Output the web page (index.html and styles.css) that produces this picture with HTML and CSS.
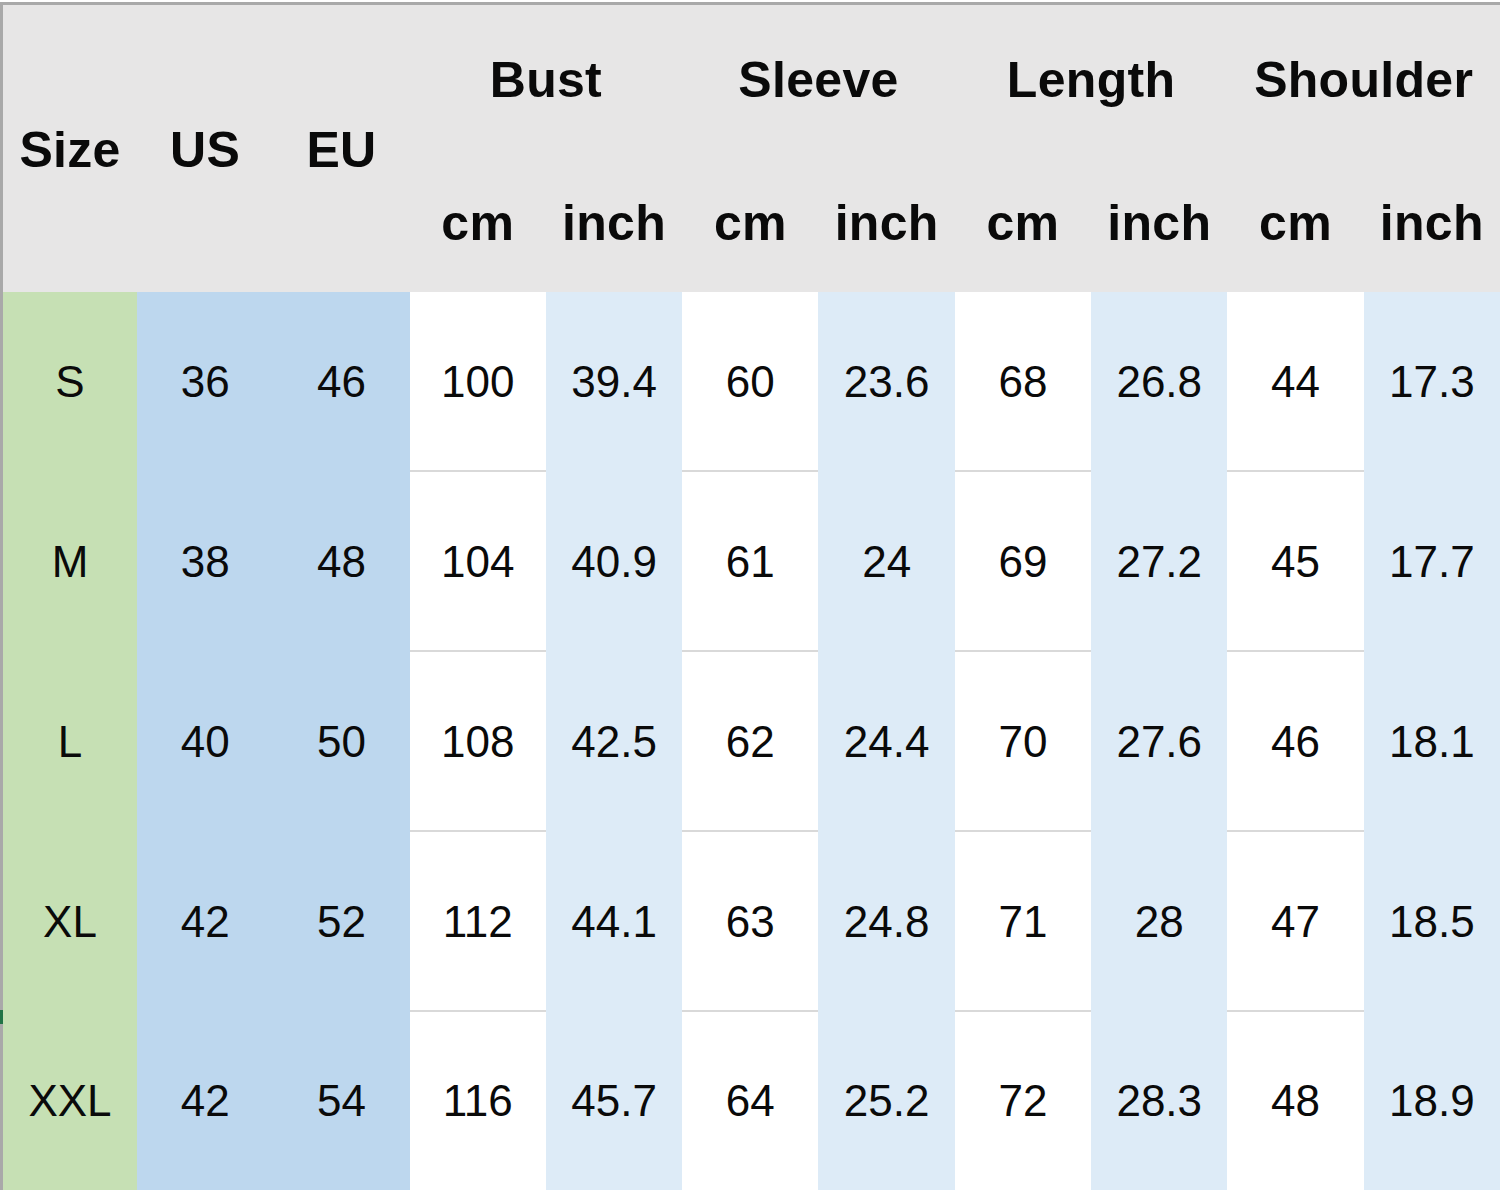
FILE: index.html
```html
<!DOCTYPE html>
<html lang="en">
<head>
<meta charset="utf-8">
<title>Size Chart</title>
<link rel="stylesheet" href="styles.css">
</head>
<body>
<div class="sheet">
  <div class="grid">
    <div class="h h-span">Size</div>
    <div class="h h-span">US</div>
    <div class="h h-span">EU</div>
    <div class="h h-group">Bust</div>
    <div class="h h-group">Sleeve</div>
    <div class="h h-group">Length</div>
    <div class="h h-group">Shoulder</div>
    <div class="h h-unit">cm</div><div class="h h-unit">inch</div>
    <div class="h h-unit">cm</div><div class="h h-unit">inch</div>
    <div class="h h-unit">cm</div><div class="h h-unit">inch</div>
    <div class="h h-unit">cm</div><div class="h h-unit">inch</div>

    <div class="c size">S</div><div class="c reg">36</div><div class="c reg">46</div>
    <div class="c cm">100</div><div class="c in">39.4</div><div class="c cm">60</div><div class="c in">23.6</div>
    <div class="c cm">68</div><div class="c in">26.8</div><div class="c cm">44</div><div class="c in">17.3</div>

    <div class="c size">M</div><div class="c reg">38</div><div class="c reg">48</div>
    <div class="c cm">104</div><div class="c in">40.9</div><div class="c cm">61</div><div class="c in">24</div>
    <div class="c cm">69</div><div class="c in">27.2</div><div class="c cm">45</div><div class="c in">17.7</div>

    <div class="c size">L</div><div class="c reg">40</div><div class="c reg">50</div>
    <div class="c cm">108</div><div class="c in">42.5</div><div class="c cm">62</div><div class="c in">24.4</div>
    <div class="c cm">70</div><div class="c in">27.6</div><div class="c cm">46</div><div class="c in">18.1</div>

    <div class="c size">XL</div><div class="c reg">42</div><div class="c reg">52</div>
    <div class="c cm">112</div><div class="c in">44.1</div><div class="c cm">63</div><div class="c in">24.8</div>
    <div class="c cm">71</div><div class="c in">28</div><div class="c cm">47</div><div class="c in">18.5</div>

    <div class="c size last">XXL</div><div class="c reg last">42</div><div class="c reg last">54</div>
    <div class="c cm last">116</div><div class="c in last">45.7</div><div class="c cm last">64</div><div class="c in last">25.2</div>
    <div class="c cm last">72</div><div class="c in last">28.3</div><div class="c cm last">48</div><div class="c in last">18.9</div>
  </div>
  <span class="row-marker"></span>
</div>
</body>
</html>
```

FILE: styles.css
```css
html, body {
  margin: 0;
  padding: 0;
  background: #ffffff;
}

body {
  width: 1500px;
  height: 1192px;
  overflow: hidden;
  font-family: "Liberation Sans", Arial, sans-serif;
  color: #0a0a0a;
}

.sheet {
  position: relative;
  margin-top: 2px;
  border-top: 3px solid #a9a9a9;
  border-left: 3px solid #a9a9a9;
}

.grid {
  display: grid;
  grid-template-columns: 134px repeat(10, 136.3px);
  grid-template-rows: 145px 142px repeat(4, 180px) 178px;
}

.h {
  background: #e7e6e6;
  display: flex;
  align-items: center;
  justify-content: center;
  font-weight: bold;
  font-size: 50px;
  letter-spacing: 0.3px;
}

.h-span {
  grid-row: span 2;
  padding-top: 2px;
}

.h-group {
  grid-column: span 2;
  padding-top: 4px;
}

.h-unit {
  padding-top: 4px;
}

.c {
  display: flex;
  align-items: center;
  justify-content: center;
  font-size: 44px;
}

.size {
  background: #c6e0b4;
}

.reg {
  background: #bdd7ee;
}

.cm {
  background: #ffffff;
  box-shadow: inset 0 -2px 0 #d9d9d9;
}

.cm.last {
  box-shadow: none;
}

.in {
  background: #ddebf7;
}

.row-marker {
  position: absolute;
  left: -3px;
  top: 1005px;
  width: 3px;
  height: 14px;
  background: #217346;
}
```
